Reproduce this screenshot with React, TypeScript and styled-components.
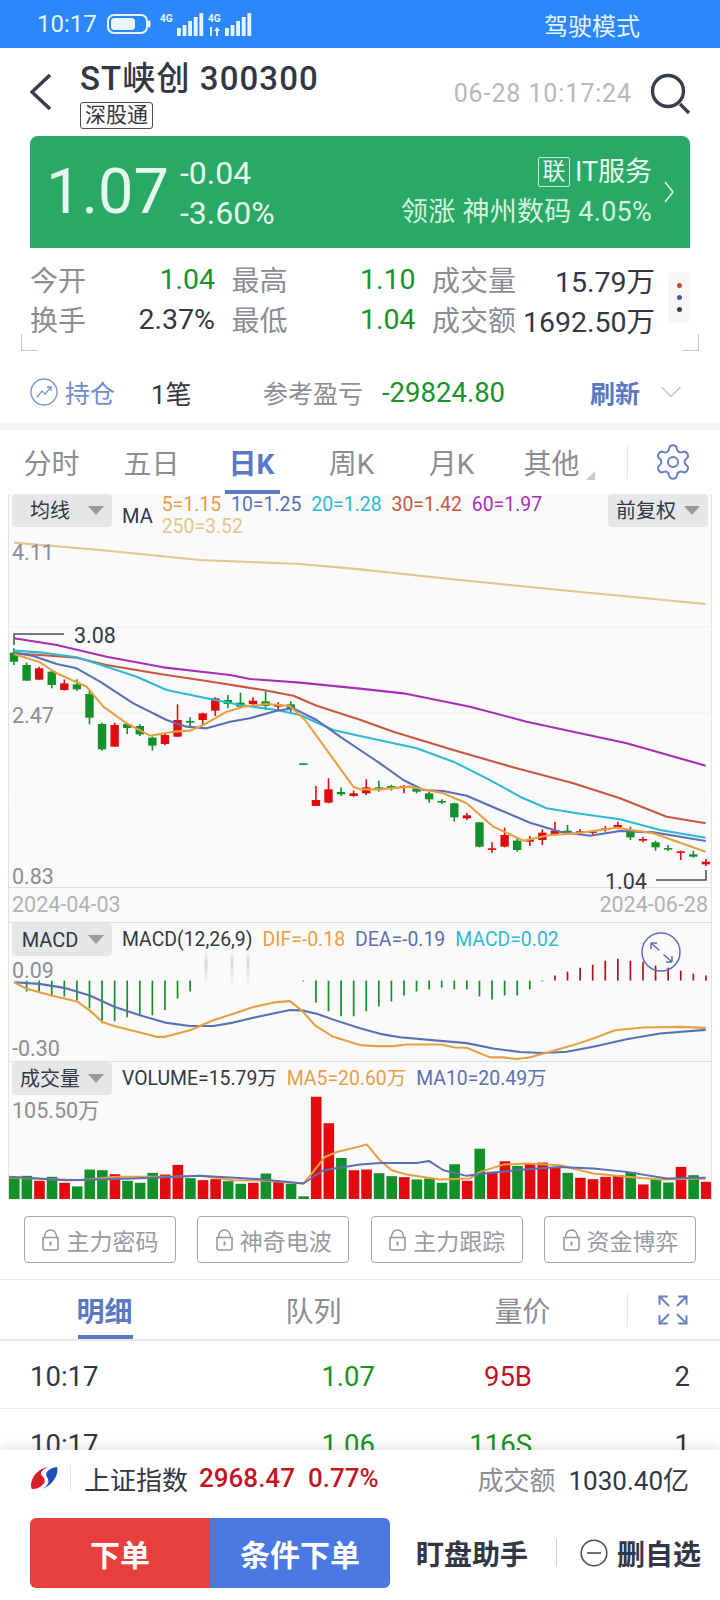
import React from "react";
import styled, { createGlobalStyle } from "styled-components";
import { ChevronDown, Expand, Settings } from "lucide-react";

const GREEN = "#189427";
const RED = "#c3141f";
const DARK = "#333744";
const GRAY = "#8b8d92";
const BLUE = "#5a78c4";
const UP = "#e30a0f";
const DOWN = "#12902a";
const ORANGE = "#e5a044";
const LINE_BLUE = "#5b70b2";

const GlobalStyle = createGlobalStyle`
  html, body {
    margin: 0;
    background: #fff;
  }
  * {
    box-sizing: border-box;
  }
  body {
    font-family: Roboto, "Noto Sans CJK SC", sans-serif;
  }
`;

const Page = styled.div`
  width: 720px;
  height: 1600px;
  display: flex;
  flex-direction: column;
  overflow: hidden;
  background: #fff;
  color: ${DARK};
`;

/* status bar */
const StatusBar = styled.div`
  height: 48px;
  flex: none;
  background: #2b87f9;
  color: #e8f2ff;
  display: flex;
  align-items: center;
  padding: 0 80px 0 37px;
  font-size: 24px;
`;
const StatusTime = styled.span`
  width: 70px;
`;
const StatusIcons = styled.svg`
  width: 150px;
  height: 48px;
  display: block;
`;
const StatusMode = styled.span`
  margin-left: auto;
`;

/* header */
const Header = styled.div`
  height: 88px;
  flex: none;
  display: flex;
  padding: 0 30px;
`;
const BackIcon = styled.svg`
  width: 24px;
  height: 40px;
  margin-top: 25px;
  flex: none;
`;
const TitleBlock = styled.div`
  margin-left: 26px;
  display: flex;
  flex-direction: column;
  align-items: flex-start;
  padding-top: 11px;
`;
const Title = styled.div`
  font-size: 33px;
  line-height: 40px;
  font-weight: 500;
  letter-spacing: 1.1px;
  white-space: nowrap;
`;
const Tag = styled.div`
  width: 73px;
  height: 27px;
  margin-top: 3px;
  border: 1px solid #4a4d58;
  border-radius: 3px;
  font-size: 21px;
  line-height: 24px;
  text-align: center;
`;
const Stamp = styled.div`
  margin-left: auto;
  margin-top: 32px;
  font-size: 25px;
  line-height: 28px;
  color: #b7b8ba;
  letter-spacing: 0.9px;
`;
const SearchIcon = styled.svg`
  width: 42px;
  height: 42px;
  margin: 25px -2px 0 18px;
  flex: none;
`;

/* price card */
const PriceCard = styled.div`
  height: 112px;
  flex: none;
  margin: 0 30px;
  padding: 0 14px 0 16px;
  background: #2aa866;
  border-radius: 8px 8px 0 0;
  display: flex;
  align-items: center;
  color: #e6f7ed;
`;
const BigPrice = styled.div`
  font-size: 63px;
  line-height: 70px;
  width: 134px;
`;
const ChangeBlock = styled.div`
  font-size: 32px;
  line-height: 40px;
  padding-top: 2px;
`;
const SectorBlock = styled.div`
  margin-left: auto;
  text-align: right;
  font-size: 27px;
  line-height: 40px;
  white-space: nowrap;
`;
const SectorTop = styled.div`
  display: flex;
  justify-content: flex-end;
  align-items: center;
  gap: 5px;
`;
const SectorBadge = styled.span`
  width: 32px;
  height: 30px;
  border: 1px solid #c9efd8;
  border-radius: 2px;
  font-size: 23px;
  line-height: 27px;
  text-align: center;
`;
const SectorLead = styled.div`
  color: #d3f2df;
  letter-spacing: 0.25px;
`;
const CardChevron = styled.svg`
  width: 14px;
  height: 24px;
  margin-left: 10px;
  flex: none;
`;

/* quote stats */
const StatsBlock = styled.div`
  height: 103px;
  flex: none;
  position: relative;
  display: flex;
  padding: 11px 30px 0;
`;
const StatsGrid = styled.div`
  width: 625px;
  display: grid;
  grid-template-columns: 185px 184px 223px;
  column-gap: 16.5px;
  grid-auto-rows: 40px;
`;
const Stat = styled.div`
  display: flex;
  justify-content: space-between;
  align-items: center;
  font-size: 28px;
  white-space: nowrap;
`;
const StatLabel = styled.span`
  color: ${GRAY};
`;
const StatValue = styled.span<{ $color?: string }>`
  color: ${(p) => p.$color || DARK};
  font-size: 28.5px;
`;
const MoreButton = styled.div`
  width: 22px;
  height: 50px;
  margin: 13px 0 0 13px;
  background: #f6f6f7;
  border-radius: 4px;
  display: flex;
  flex-direction: column;
  align-items: center;
  justify-content: center;
  gap: 7px;
`;
const MoreDot = styled.i<{ $color: string }>`
  width: 5px;
  height: 5px;
  border-radius: 50%;
  background: ${(p) => p.$color};
`;
const Corner = styled.i<{ $side: "left" | "right" }>`
  position: absolute;
  bottom: 0;
  ${(p) => p.$side}: 21px;
  width: 17px;
  height: 17px;
  border-bottom: 1px solid #c9c9cc;
  border-${(p) => p.$side}: 1px solid #c9c9cc;
`;

/* holding row */
const HoldingRow = styled.div`
  height: 72px;
  flex: none;
  display: flex;
  align-items: center;
  padding: 10px 31px 0 30px;
  font-size: 25px;
`;
const HoldingLink = styled.div`
  display: flex;
  align-items: center;
  gap: 7px;
  width: 121px;
  color: #6f8dca;
`;
const HoldingIcon = styled.svg`
  width: 28px;
  height: 28px;
  flex: none;
`;
const HoldingCount = styled.div`
  width: 112px;
  font-size: 26px;
`;
const HoldingLabel = styled.div`
  width: 119px;
  color: ${GRAY};
`;
const HoldingValue = styled.div`
  color: ${GREEN};
  font-size: 27.5px;
`;
const RefreshLink = styled.div`
  margin-left: auto;
  color: ${BLUE};
  font-weight: 700;
  display: flex;
  align-items: center;
  gap: 13px;
`;
const Band = styled.div`
  height: 7px;
  flex: none;
  background: #f5f5f5;
`;

/* period tabs */
const TabRow = styled.div`
  display: flex;
  align-items: stretch;
  flex: none;
`;
const PeriodTabs = styled(TabRow)`
  padding-left: 1.5px;
`;
const Tab = styled.div<{ $active?: boolean; $width: number; $height: number }>`
  width: ${(p) => p.$width}px;
  height: ${(p) => p.$height}px;
  display: flex;
  align-items: center;
  justify-content: center;
  font-size: 28px;
  position: relative;
  color: ${(p) => (p.$active ? BLUE : GRAY)};
  font-weight: ${(p) => (p.$active ? 700 : 400)};
  &::after {
    content: "";
    display: ${(p) => (p.$active ? "block" : "none")};
    position: absolute;
    left: calc(50% - 27px);
    bottom: 0;
    width: 55px;
    height: 4px;
    background: ${BLUE};
  }
`;
const OtherMark = styled.i`
  position: absolute;
  right: 7px;
  bottom: 14px;
  width: 0;
  height: 0;
  border-left: 9px solid transparent;
  border-bottom: 9px solid #c8c9cc;
`;
const TabSep = styled.div<{ $offset: number }>`
  width: 1px;
  height: 34px;
  align-self: center;
  margin-left: ${(p) => p.$offset}px;
  background: #e6e6e8;
`;
const TabTool = styled.div<{ $offset: number }>`
  margin-left: ${(p) => p.$offset}px;
  align-self: center;
  display: flex;
  color: #6a80c2;
`;

/* chart panel */
const ChartPanel = styled.div`
  height: 706px;
  flex: none;
  margin: 0 8px;
  background: #fafafa;
  border-left: 1px solid #e2e2e4;
  border-right: 1px solid #e2e2e4;
  display: flex;
  flex-direction: column;
`;
const ChartSection = styled.div<{ $height: number }>`
  height: ${(p) => p.$height}px;
  flex: none;
  position: relative;
  & + & {
    border-top: 1px solid #dfdfe1;
  }
`;
const ChartSvg = styled.svg`
  display: block;
  width: 702px;
  height: 100%;
`;
const Legend = styled.div`
  position: absolute;
  left: 3px;
  right: 3px;
  top: 0;
  display: flex;
  align-items: flex-start;
  font-size: 19.4px;
  line-height: 24px;
`;
const Chip = styled.div`
  width: 100px;
  height: 33px;
  flex: none;
  background: #e6e7e9;
  border-radius: 4px;
  display: grid;
  grid-template-columns: 76px 16px;
  align-items: center;
  justify-items: center;
  font-size: 20px;
  color: ${DARK};
  &::after {
    content: "";
    border-left: 8px solid transparent;
    border-right: 8px solid transparent;
    border-top: 9px solid #9a9b9f;
  }
`;
const LegendItems = styled.div`
  margin-left: 10px;
  display: flex;
  align-items: center;
  height: 33px;
  gap: 10px;
  white-space: nowrap;
`;
const MaLegend = styled.div`
  margin-left: 10px;
  display: flex;
  gap: 9px;
`;
const MaTitle = styled.span`
  margin-top: 10px;
  font-size: 20px;
`;
const MaValues = styled.div`
  display: flex;
  flex-wrap: wrap;
  width: 400px;
  column-gap: 10px;
  line-height: 22px;
`;
const LegendText = styled.span<{ $color?: string }>`
  color: ${(p) => p.$color || DARK};
`;
const AdjustChip = styled(Chip)`
  margin-left: auto;
`;
const ZoomIcon = styled.svg`
  position: absolute;
  right: 30px;
  top: 9px;
  width: 40px;
  height: 40px;
`;
const Tick = styled.text<{ $color?: string }>`
  font-family: Roboto, "Noto Sans CJK SC", sans-serif;
  font-size: 21.5px;
  fill: ${(p) => p.$color || "#8c8d91"};
`;

/* indicator buttons */
const ToolRow = styled.div`
  height: 80px;
  flex: none;
  display: flex;
  gap: 21.5px;
  padding: 16px 24px 0;
  border-bottom: 1px solid #eaeaec;
`;
const ToolButton = styled.div`
  width: 152px;
  height: 47px;
  border: 1px solid #a5a6aa;
  border-radius: 4px;
  display: flex;
  align-items: center;
  justify-content: center;
  gap: 6px;
  font-size: 23px;
  color: #9a9b9f;
`;
const LockIcon = styled.svg`
  width: 19px;
  height: 22px;
  flex: none;
`;

/* trade list */
const TradeTabs = styled(TabRow)`
  height: 61px;
  border-bottom: 2px solid #e9e9eb;
`;
const TradeList = styled.div`
  flex: 1;
  min-height: 0;
  overflow: hidden;
`;
const TradeRow = styled.div`
  height: 68px;
  padding: 3px 30px 0;
  display: grid;
  grid-template-columns: 200px 145px 157px 158px;
  align-items: center;
  font-size: 27.5px;
  border-bottom: 1px solid #ececee;
`;
const TradeCell = styled.div<{ $color?: string }>`
  text-align: right;
  color: ${(p) => p.$color || DARK};
  &:first-child {
    text-align: left;
  }
`;

/* bottom bar */
const BottomBar = styled.div`
  height: 150px;
  flex: none;
  position: relative;
  background: #fff;
  box-shadow: 0 -5px 9px rgba(0, 0, 0, 0.09);
`;
const IndexRow = styled.div`
  height: 68px;
  display: flex;
  align-items: center;
  padding: 0 31px 12px 30px;
  font-size: 26px;
  white-space: nowrap;
`;
const IndexLogo = styled.svg`
  width: 28px;
  height: 24px;
  flex: none;
`;
const IndexSep = styled.i`
  width: 1px;
  height: 26px;
  margin: 0 13px 0 12px;
  background: #e5e5e7;
`;
const IndexValue = styled.span`
  margin-left: 11px;
  color: ${RED};
  font-size: 26px;
  font-weight: 500;
  & + & {
    margin-left: 13px;
  }
`;
const IndexTurnover = styled.span`
  margin-left: auto;
  color: ${GRAY};
`;
const IndexAmount = styled.span`
  margin-left: 13px;
  font-size: 26px;
`;
const ActionRow = styled.div`
  display: flex;
  align-items: center;
  padding-left: 30px;
`;
const OrderGroup = styled.div`
  display: flex;
  height: 70px;
  border-radius: 6px;
  overflow: hidden;
`;
const OrderButton = styled.div<{ $bg: string }>`
  width: 180px;
  display: flex;
  align-items: center;
  justify-content: center;
  background: ${(p) => p.$bg};
  color: #fff;
  font-size: 30px;
  font-weight: 700;
`;
const ActionText = styled.div`
  margin-left: 26px;
  font-size: 28px;
  font-weight: 700;
  white-space: nowrap;
`;
const ActionSep = styled.i`
  width: 1px;
  height: 28px;
  margin-left: 28px;
  background: #cfd0d3;
`;
const RemoveIcon = styled.svg`
  width: 28px;
  height: 28px;
  margin-left: 23px;
  flex: none;
`;
const RemoveText = styled(ActionText)`
  margin-left: 9px;
`;

type P = [number, number];

// values read off the reference at 3x, left half and right half
const toPoints = (left: P[], right: P[], y0: number) =>
  [...left.map(([x, y]) => [x / 3, y0 + y / 3]), ...right.map(([x, y]) => [360 + x / 3, y0 + y / 3])]
    .map((p) => p.join(","))
    .join(" ");

const cx = (i: number) => 14 + 12.58 * i;

const maLines: { color: string; left: P[]; right: P[] }[] = [
  { color: "#e0c78d", left: [[42,38],[300,60],[600,90],[900,102],[1080,118]], right: [[300,150],[600,180],[1037,222]] },
  { color: "#a52fb6", left: [[42,325],[170,345],[320,380],[490,412],[690,435],[750,447],[900,458],[1080,476]], right: [[130,490],[330,530],[500,575],[800,640],[1037,707]] },
  { color: "#c9573f", left: [[42,370],[120,375],[230,383],[320,405],[480,432],[620,453],[790,480],[880,497],[950,527],[1080,569]], right: [[100,605],[280,660],[470,715],[640,760],[780,805],[920,860],[1037,880]] },
  { color: "#2fb9d3", left: [[42,362],[130,368],[230,382],[320,410],[410,440],[500,480],[620,505],[720,525],[830,540],[900,555],[1000,600],[1080,618]], right: [[80,635],[170,655],[280,695],[380,745],[480,800],[560,835],[650,850],[780,868],[900,900],[1037,923]] },
  { color: LINE_BLUE, left: [[42,368],[100,378],[170,402],[230,415],[300,455],[400,520],[500,570],[560,590],[620,595],[690,575],[750,565],[830,542],[880,535],[950,570],[1020,620],[1080,660]], right: [[60,700],[130,750],[190,780],[250,783],[320,797],[420,840],[510,878],[600,905],[690,917],[780,903],[880,907],[1037,933]] },
  { color: ORANGE, left: [[42,372],[120,397],[170,430],[260,470],[310,530],[380,580],[450,617],[520,605],[570,602],[610,585],[680,545],[730,530],[800,522],[870,528],[915,570],[1060,770],[1080,778]], right: [[60,778],[150,770],[250,790],[320,820],[400,890],[490,932],[570,915],[650,910],[770,893],[880,910],[1037,965]] },
];

// [up, wick top, body top, body bottom, wick bottom]
const candles: [number, number, number, number, number][] = [
  [0,355,368,395,405],[0,398,405,452,452],[1,410,415,449,449],[0,420,425,465,475],[1,448,460,480,482],
  [0,448,463,478,482],[0,480,492,563,583],[0,578,582,658,662],[1,578,585,650,650],[0,578,582,594,612],
  [0,583,588,613,618],[0,620,623,647,662],[1,610,615,642,646],[1,523,570,620,620],[0,562,573,578,590],
  [1,548,550,570,588],[1,502,505,542,558],[0,495,510,522,535],[0,488,518,530,535],[1,502,512,522,530],
  [0,483,514,528,540],[1,517,523,530,540],[0,514,523,537,550],[0,700,700,703,703],[1,768,810,828,828],
  [1,745,778,818,820],[0,772,786,793,798],[1,782,790,798,800],[1,748,772,790,795],[0,752,772,780,785],
  [0,764,768,777,782],[1,765,768,773,790],[0,770,775,785,790],[0,785,790,808,818],[0,808,813,817,822],
  [0,818,820,862,875],[1,848,856,865,870],[0,876,877,950,952],[1,937,955,960,968],[1,893,915,950,952],
  [0,925,932,960,965],[1,918,928,935,948],[1,898,908,930,945],[1,875,902,912,917],[0,885,902,906,915],
  [1,897,904,908,915],[1,900,904,908,915],[1,888,895,899,905],[1,875,885,892,898],[0,890,900,922,930],
  [1,920,927,932,937],[0,932,937,952,962],[0,945,954,958,963],[1,962,964,967,990],[0,962,973,980,983],
  [1,987,995,1003,1008],
];

// bar length in px per day, negative hangs below zero
const macdBars = [
  0,-11,-11,-16,-16,-20,-28,-43,-41,-37,-35,-35,-30,-18,-11,0,0,0,0,0,0,0,0,-1,-22,-31,-36,-36,
  -31,-26,-21,-15,-11,-9,-7,-9,-9,-16,-19,-15,-15,-9,-1,5,9,13,16,20,22,20,19,15,13,10,7,5,
];

const macdDif = toPoints(
  [[42,200],[80,220],[155,240],[231,258],[269,285],[307,320],[345,333],[420,352],[470,365],[495,365],[570,345],[640,315],[700,295],[760,275],[830,260],[870,257],[905,285],[945,330],[1000,365],[1080,390]],
  [[50,393],[100,393],[140,388],[245,388],[285,397],[320,398],[390,427],[430,427],[470,432],[510,427],[570,410],[640,390],[700,370],[765,345],[850,337],[960,335],[1037,338]],
  915
);
const macdDea = toPoints(
  [[42,200],[118,205],[193,217],[269,240],[345,275],[420,300],[495,322],[570,332],[640,332],[700,322],[770,305],[870,284],[905,285],[950,295],[1000,313],[1080,339]],
  [[60,356],[120,366],[250,378],[320,384],[400,400],[480,411],[546,414],[620,410],[700,395],[800,372],[900,355],[1037,344]],
  915
);

// [up, top of the bar at 3x]
const volumes: [number, number][] = [
  [0,785],[0,782],[1,797],[0,785],[1,803],[0,814],[0,763],[0,765],[1,777],[0,797],[0,803],[0,773],[1,778],[1,749],
  [0,789],[1,795],[1,792],[0,798],[0,806],[1,803],[0,775],[1,800],[0,806],[0,844],[1,543],[1,623],[0,728],[1,765],
  [1,763],[0,774],[0,783],[1,786],[0,793],[0,790],[0,803],[0,747],[1,797],[0,700],[1,770],[1,738],[0,752],[1,745],
  [1,742],[1,755],[0,773],[1,788],[1,792],[1,785],[1,780],[0,770],[1,808],[0,793],[0,802],[1,755],[0,780],[1,800],
];
const volMa5 = toPoints(
  [[28,787],[100,790],[240,795],[350,785],[430,785],[520,785],[600,782],[700,795],[800,797],[910,805],[935,775],[975,725],[1010,710],[1080,693]],
  [[20,687],[60,735],[95,765],[140,778],[240,793],[330,790],[360,770],[430,748],[500,745],[600,750],[700,775],[800,785],[900,793],[1037,790]],
  915
);
const volMa10 = toPoints(
  [[28,785],[200,795],[400,790],[600,782],[780,792],[910,805],[970,765],[1080,748]],
  [[60,743],[170,743],[207,737],[250,765],[320,782],[400,772],[500,762],[600,755],[700,760],[800,770],[920,790],[1037,788]],
  915
);

const MainChart = () => (
  <ChartSvg viewBox="9 494 702 428" preserveAspectRatio="none">
    <path d="M9 627H711M9 713H711M9 800H711" stroke="#f0f0f1" strokeWidth="1" />
    <path d="M9 887.5H711" stroke="#dfdfe1" strokeWidth="1" />
    {candles.map(([up, wt, bt, bb, wb], i) => {
      const color = up ? UP : DOWN;
      const y = (v: number) => 530 + v / 3;
      return (
        <g key={i}>
          <line x1={cx(i)} x2={cx(i)} y1={y(wt)} y2={y(wb)} stroke={color} strokeWidth="1.6" />
          <rect x={cx(i) - 4.2} y={y(bt)} width="8.4" height={Math.max((bb - bt) / 3, 1.6)} fill={color} />
        </g>
      );
    })}
    {maLines.map((l) => (
      <polyline key={l.color} points={toPoints(l.left, l.right, 530)} fill="none" stroke={l.color} strokeWidth="2.1" strokeLinejoin="round" />
    ))}
    <path d="M14 645V634H64M706 870V880H656" fill="none" stroke="#4a4d5a" strokeWidth="1.5" />
    <Tick x="74" y="643" $color={DARK}>3.08</Tick>
    <Tick x="605" y="889" $color={DARK}>1.04</Tick>
    <Tick x="12" y="560">4.11</Tick>
    <Tick x="12" y="723">2.47</Tick>
    <Tick x="12" y="884">0.83</Tick>
    <Tick x="12" y="912" $color="#b0b1b4">2024-04-03</Tick>
    <Tick x="708" y="912" $color="#b0b1b4" textAnchor="end">2024-06-28</Tick>
  </ChartSvg>
);

const MacdChart = () => (
  <ChartSvg viewBox="9 922 702 139" preserveAspectRatio="none">
    <defs>
      <linearGradient id="ghost" x1="0" y1="0" x2="0" y2="1">
        <stop offset="0" stopColor="#d8d8da" stopOpacity="0" />
        <stop offset="0.4" stopColor="#d8d8da" />
        <stop offset="1" stopColor="#f4f4f5" />
      </linearGradient>
    </defs>
    {[206, 232, 248].map((x) => (
      <rect key={x} x={x - 1.5} y="948" width="3" height="35" fill="url(#ghost)" />
    ))}
    {macdBars.map((v, i) =>
      v === 0 ? null : (
        <line key={i} x1={cx(i)} x2={cx(i)} y1="980" y2={980 - v} stroke={v > 0 ? "#a8141f" : DOWN} strokeWidth="1.7" />
      )
    )}
    <polyline points={macdDea} fill="none" stroke={LINE_BLUE} strokeWidth="2.1" strokeLinejoin="round" />
    <polyline points={macdDif} fill="none" stroke={ORANGE} strokeWidth="2.1" strokeLinejoin="round" />
    <Tick x="12" y="977">0.09</Tick>
    <Tick x="12" y="1056">-0.30</Tick>
  </ChartSvg>
);

const VolumeChart = () => (
  <ChartSvg viewBox="9 1061 702 139" preserveAspectRatio="none">
    {volumes.map(([up, top], i) => {
      const y = 915 + top / 3;
      return <rect key={i} x={9 + 12.58 * i} y={y} width="10.6" height={1199 - y} fill={up ? UP : DOWN} />;
    })}
    <polyline points={volMa5} fill="none" stroke={ORANGE} strokeWidth="2" strokeLinejoin="round" />
    <polyline points={volMa10} fill="none" stroke={LINE_BLUE} strokeWidth="2" strokeLinejoin="round" />
    <Tick x="12" y="1117">105.50万</Tick>
  </ChartSvg>
);

const Lock = () => (
  <LockIcon viewBox="0 0 19 22" fill="none" stroke="#98999d" strokeWidth="1.6">
    <path d="M2 8.5h15V19a2 2 0 0 1-2 2H4a2 2 0 0 1-2-2z" />
    <path d="M3.5 8.5C3.5 4 6 1 9.5 1s6 3 6 7.5" />
    <path d="M9.5 12.5v4" strokeWidth="2" />
  </LockIcon>
);

const periodTabs = ["分时", "五日", "日K", "周K", "月K", "其他"];
const toolNames = ["主力密码", "神奇电波", "主力跟踪", "资金博弈"];

const stats = [
  ["今开", "1.04", GREEN, "最高", "1.10", GREEN, "成交量", "15.79万", DARK],
  ["换手", "2.37%", DARK, "最低", "1.04", GREEN, "成交额", "1692.50万", DARK],
];

const trades = [
  ["10:17", "1.07", GREEN, "95B", RED, "2"],
  ["10:17", "1.06", GREEN, "116S", GREEN, "1"],
];

const barHeights = [8, 11, 15, 19, 23];

export default function App() {
  return (
    <Page>
      <GlobalStyle />
      <StatusBar>
        <StatusTime>10:17</StatusTime>
        <StatusIcons viewBox="0 0 150 48" fill="#eaf3ff">
          <rect x="1" y="15" width="39" height="18" rx="6" fill="none" stroke="#eaf3ff" strokeWidth="2" />
          <rect x="4" y="18" width="24" height="12" rx="3.5" />
          <rect x="41" y="20.5" width="2.4" height="7" rx="1" />
          <text x="53" y="22" fontSize="10" fontWeight="700">4G</text>
          {barHeights.map((h, i) => (
            <rect key={i} x={70 + 5.6 * i} y={36 - h} width="3.8" height={h} />
          ))}
          <text x="101" y="22" fontSize="10" fontWeight="700">4G</text>
          <path d="M103 27h2v9h-2zM110 27l3 4h-2v5h-2v-5h-2z" />
          {barHeights.map((h, i) => (
            <rect key={i} x={118 + 5.6 * i} y={36 - h} width="3.8" height={h} />
          ))}
        </StatusIcons>
        <StatusMode>驾驶模式</StatusMode>
      </StatusBar>

      <Header>
        <BackIcon viewBox="0 0 24 40" fill="none" stroke="#3a3f4d" strokeWidth="3.6">
          <polyline points="20,2 2,19 20,36" />
        </BackIcon>
        <TitleBlock>
          <Title>ST峡创 300300</Title>
          <Tag>深股通</Tag>
        </TitleBlock>
        <Stamp>06-28 10:17:24</Stamp>
        <SearchIcon viewBox="0 0 42 42" fill="none" stroke="#3a3f4d" strokeWidth="3.4">
          <circle cx="18" cy="18" r="15.5" />
          <path d="M30 31l9 9" />
        </SearchIcon>
      </Header>

      <PriceCard>
        <BigPrice>1.07</BigPrice>
        <ChangeBlock>
          <div>-0.04</div>
          <div>-3.60%</div>
        </ChangeBlock>
        <SectorBlock>
          <SectorTop>
            <SectorBadge>联</SectorBadge>
            <span>IT服务</span>
          </SectorTop>
          <SectorLead>领涨 神州数码 4.05%</SectorLead>
        </SectorBlock>
        <CardChevron viewBox="0 0 14 24" fill="none" stroke="#dff5e8" strokeWidth="1.6">
          <polyline points="3,2 11,12 3,22" />
        </CardChevron>
      </PriceCard>

      <StatsBlock>
        <StatsGrid>
          {stats.flatMap((row) =>
            [0, 3, 6].map((n) => (
              <Stat key={String(row[n])}>
                <StatLabel>{row[n]}</StatLabel>
                <StatValue $color={row[n + 2]}>{row[n + 1]}</StatValue>
              </Stat>
            ))
          )}
        </StatsGrid>
        <MoreButton>
          <MoreDot $color="#b5493a" />
          <MoreDot $color="#3f5fa8" />
          <MoreDot $color="#3a3d48" />
        </MoreButton>
        <Corner $side="left" />
        <Corner $side="right" />
      </StatsBlock>

      <HoldingRow>
        <HoldingLink>
          <HoldingIcon viewBox="0 0 28 28" fill="none" stroke="#7e99cf" strokeWidth="1.4">
            <circle cx="14" cy="14" r="13" />
            <path d="M7 19l5-6 3 3 6-7M17 9h4v4" />
          </HoldingIcon>
          持仓
        </HoldingLink>
        <HoldingCount>1笔</HoldingCount>
        <HoldingLabel>参考盈亏</HoldingLabel>
        <HoldingValue>-29824.80</HoldingValue>
        <RefreshLink>
          刷新
          <ChevronDown size={36} color="#c4c6cb" strokeWidth={1.1} />
        </RefreshLink>
      </HoldingRow>
      <Band />

      <PeriodTabs>
        {periodTabs.map((t) => (
          <Tab key={t} $width={100} $height={64} $active={t === "日K"}>
            {t}
            {t === "其他" && <OtherMark />}
          </Tab>
        ))}
        <TabSep $offset={25} />
        <TabTool $offset={25}>
          <Settings size={40} strokeWidth={1.2} />
        </TabTool>
      </PeriodTabs>

      <ChartPanel>
        <ChartSection $height={428}>
          <MainChart />
          <Legend>
            <Chip>均线</Chip>
            <MaLegend>
              <MaTitle>MA</MaTitle>
              <MaValues>
                <LegendText $color={ORANGE}>5=1.15</LegendText>
                <LegendText $color={LINE_BLUE}>10=1.25</LegendText>
                <LegendText $color="#2fb9d3">20=1.28</LegendText>
                <LegendText $color="#c9573f">30=1.42</LegendText>
                <LegendText $color="#a52fb6">60=1.97</LegendText>
                <LegendText $color="#e0c78d">250=3.52</LegendText>
              </MaValues>
            </MaLegend>
            <AdjustChip>前复权</AdjustChip>
          </Legend>
        </ChartSection>
        <ChartSection $height={139}>
          <MacdChart />
          <Legend>
            <Chip>MACD</Chip>
            <LegendItems>
              <LegendText>MACD(12,26,9)</LegendText>
              <LegendText $color={ORANGE}>DIF=-0.18</LegendText>
              <LegendText $color={LINE_BLUE}>DEA=-0.19</LegendText>
              <LegendText $color="#2fb9d3">MACD=0.02</LegendText>
            </LegendItems>
          </Legend>
          <ZoomIcon viewBox="0 0 40 40" fill="none" stroke={LINE_BLUE} strokeWidth="1.5">
            <circle cx="20" cy="20" r="19" />
            <path d="M10 11l8.5 7.5M10 11h6M10 11v6M31 30l-8.5-7.5M31 30h-6M31 30v-6" />
          </ZoomIcon>
        </ChartSection>
        <ChartSection $height={139}>
          <VolumeChart />
          <Legend>
            <Chip>成交量</Chip>
            <LegendItems>
              <LegendText>VOLUME=15.79万</LegendText>
              <LegendText $color={ORANGE}>MA5=20.60万</LegendText>
              <LegendText $color={LINE_BLUE}>MA10=20.49万</LegendText>
            </LegendItems>
          </Legend>
        </ChartSection>
      </ChartPanel>

      <ToolRow>
        {toolNames.map((t) => (
          <ToolButton key={t}>
            <Lock />
            {t}
          </ToolButton>
        ))}
      </ToolRow>

      <TradeTabs>
        {["明细", "队列", "量价"].map((t) => (
          <Tab key={t} $width={209} $height={59} $active={t === "明细"}>
            {t}
          </Tab>
        ))}
        <TabSep $offset={0} />
        <TabTool $offset={27}>
          <Expand size={36} strokeWidth={1.3} />
        </TabTool>
      </TradeTabs>

      <TradeList>
        {trades.map((r, i) => (
          <TradeRow key={i}>
            <TradeCell>{r[0]}</TradeCell>
            <TradeCell $color={r[2]}>{r[1]}</TradeCell>
            <TradeCell $color={r[4]}>{r[3]}</TradeCell>
            <TradeCell>{r[5]}</TradeCell>
          </TradeRow>
        ))}
      </TradeList>

      <BottomBar>
        <IndexRow>
          <IndexLogo viewBox="0 0 28 24">
            <path d="M1.5 22.5C-1 15 6 2.5 18.5 1 12 3.5 9.5 7 12 10c3 2.5 4 5.5 1 8.500-4 4-9.500 5.500-11.500 4z" fill="#d8202a" />
            <path d="M27 1c2.500 7-5 19.500-15.500 22 6-2.500 8.500-7 6-11C14.500 8.500 16 3 27 1z" fill="#1f4fb4" />
          </IndexLogo>
          <IndexSep />
          上证指数
          <IndexValue>2968.47</IndexValue>
          <IndexValue>0.77%</IndexValue>
          <IndexTurnover>成交额</IndexTurnover>
          <IndexAmount>1030.40亿</IndexAmount>
        </IndexRow>
        <ActionRow>
          <OrderGroup>
            <OrderButton $bg="#e63f3c">下单</OrderButton>
            <OrderButton $bg="#4a78e2">条件下单</OrderButton>
          </OrderGroup>
          <ActionText>盯盘助手</ActionText>
          <ActionSep />
          <RemoveIcon viewBox="0 0 28 28" fill="none" stroke="#4a4d58" strokeWidth="1.6">
            <circle cx="14" cy="14" r="12.8" />
            <path d="M7 14h14" />
          </RemoveIcon>
          <RemoveText>删自选</RemoveText>
        </ActionRow>
      </BottomBar>
    </Page>
  );
}
